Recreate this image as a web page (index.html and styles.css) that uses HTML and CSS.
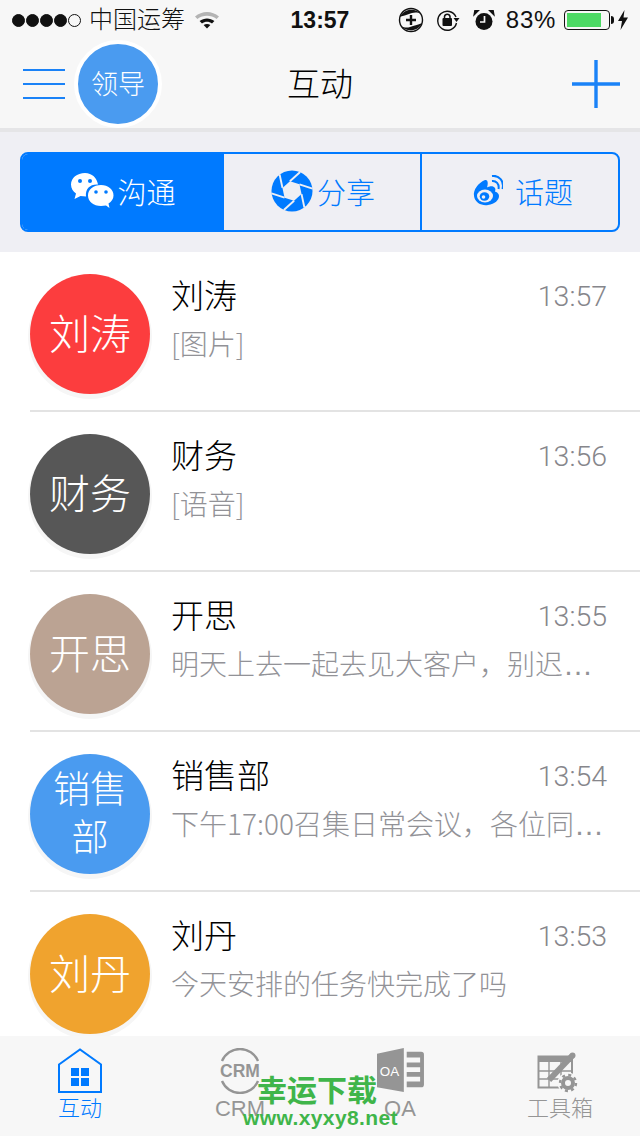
FILE: index.html
```html
<!DOCTYPE html>
<html lang="zh-CN">

<head>
    <meta charset="UTF-8">
    <meta name="viewport" content="width=device-width, initial-scale=1.0">
    <title>互动</title>
    <link rel="stylesheet" href="styles.css">
</head>

<body>
    <div class="app">
        <!-- Status bar -->
        <div class="status">
            <div class="status-left">
                <span class="signal"><i></i><i></i><i></i><i></i><i class="off"></i></span>
                <span class="carrier">中国运筹</span>
                <svg class="wifi" width="26" height="20" viewBox="0 0 26 20">
                    <path d="M1 6.500C8 .5 18 .5 25 6.500L22.600 9C17 4.600 9 4.600 3.400 9Z" fill="#b4b4b4"/>
                    <path d="M5.600 11C10 7.600 16 7.600 20.400 11L18 13.400C15 11.200 11 11.200 8 13.400Z" fill="#111"/>
                    <path d="M9.600 15C11.600 13.800 14.400 13.800 16.400 15L13 18.600Z" fill="#111"/>
                </svg>
            </div>
            <div class="clock">13:57</div>
            <div class="status-right">
                <svg class="sync" width="26" height="26" viewBox="0 0 26 26">
                    <circle cx="13" cy="13" r="11.500" fill="none" stroke="#111" stroke-width="1.400"/>
                    <path d="M2 10C5 2 17 0 23 7C18 4 14 6 11 7C7 8.500 4 9 2 10ZM24 16C21 24 9 26 3 19C8 22 12 20 15 19C19 18 22 17 24 16Z" fill="#111"/>
                    <path d="M13 8V18M8 13H18" stroke="#111" stroke-width="2.400"/>
                </svg>
                <svg class="lock" width="24" height="24" viewBox="0 0 24 24">
                    <path d="M20 9A9.500 9.500 0 1 0 20.500 15" fill="none" stroke="#111" stroke-width="1.400"/>
                    <path d="M17.500 10H23.500L20.500 14Z" fill="#111"/>
                    <rect x="6.500" y="10" width="9.500" height="8" rx="1" fill="#111"/>
                    <path d="M8.500 10V8.500A2.800 2.800 0 0 1 14 8.500V10" fill="none" stroke="#111" stroke-width="1.500"/>
                </svg>
                <svg class="alarm" width="22" height="22" viewBox="0 0 22 22">
                    <circle cx="11" cy="12.500" r="8.500" fill="#111"/>
                    <path d="M1 6L5.500 1.500L1.800 1.500ZM21 6L16.500 1.500L20.200 1.500Z" fill="#111" stroke="#111" stroke-width="1.200"/>
                    <path d="M11.500 7V13H7" fill="none" stroke="#f7f7f7" stroke-width="1.700"/>
                </svg>
                <span class="percent">83%</span>
                <span class="battery"><span class="battery-fill"></span></span>
                <span class="battery-tip"></span>
                <svg class="bolt" width="10" height="20" viewBox="0 0 10 20">
                    <path d="M6.500 0L0 11H4L2.500 20L10 7.500H5.500Z" fill="#111"/>
                </svg>
            </div>
        </div>

        <!-- Nav bar -->
        <div class="nav">
            <div class="menu"><i></i><i></i><i></i></div>
            <div class="boss">领导</div>
            <div class="nav-title">互动</div>
            <svg class="add" width="48" height="48" viewBox="0 0 48 48">
                <path d="M24 0V48M0 24H48" stroke="#1a82f7" stroke-width="3.400"/>
            </svg>
        </div>

        <!-- Segmented control -->
        <div class="seg-wrap">
            <div class="seg">
                <div class="seg-item seg-on seg-first">
                    <svg width="44" height="38" viewBox="0 0 44 38">
                        <path d="M15 1C7 1 1 6 1 12.500C1 16.500 3 19.500 6 21.500L4.500 27L10.500 24L16 24.500C15 17 20 12 28 12.500C27 6 22 1 15 1Z" fill="#fff"/>
                        <path d="M31 13C23.500 13 18 17.500 18 23.500C18 29.500 23.500 34 31 34L36 33.500L39.500 36L38.500 31.500C41.500 29.500 43.500 27 43.500 23.500C43.500 17.500 38 13 31 13Z" fill="#fff"/>
                        <circle cx="10" cy="9" r="2" fill="#007aff"/>
                        <circle cx="20" cy="9" r="2" fill="#007aff"/>
                        <circle cx="26" cy="20" r="1.800" fill="#007aff"/>
                        <circle cx="36" cy="20" r="1.800" fill="#007aff"/>
                    </svg>
                    <span>沟通</span>
                </div>
                <div class="seg-item seg-second">
                    <svg width="42" height="42" viewBox="0 0 44 44">
                        <circle cx="22" cy="22" r="21.500" fill="#007aff"/>
                        <g stroke="#efeff4" stroke-width="2" transform="rotate(-12 22 22)">
                            <path d="M22 11.500L34.500 4.300"/>
                            <path d="M22 11.500L34.500 4.300" transform="rotate(60 22 22)"/>
                            <path d="M22 11.500L34.500 4.300" transform="rotate(120 22 22)"/>
                            <path d="M22 11.500L34.500 4.300" transform="rotate(180 22 22)"/>
                            <path d="M22 11.500L34.500 4.300" transform="rotate(240 22 22)"/>
                            <path d="M22 11.500L34.500 4.300" transform="rotate(300 22 22)"/>
                            <path d="M22 11.500L31.100 16.750V27.250L22 32.500L12.900 27.250V16.750Z" fill="#efeff4" stroke="none"/>
                        </g>
                    </svg>
                    <span>分享</span>
                </div>
                <div class="seg-item seg-third">
                    <svg width="30" height="32" viewBox="0 0 30 32">
                        <path d="M12 5C5 8 0 15 1 21C2 28 9 31 15 30C22 29 26 25 26 21C26 18 23 17 22 16.500C23 14 22 12 20 11.500C18 11 15 12 14 12.500C15 9 15 7 14 5.500C13.500 5 13 4.800 12 5Z" fill="#007aff"/>
                        <ellipse cx="12" cy="21" rx="8" ry="6.500" fill="#efeff4"/>
                        <ellipse cx="11.500" cy="21.500" rx="4.800" ry="4.200" fill="#007aff"/>
                        <circle cx="10.500" cy="22" r="1.800" fill="#efeff4"/>
                        <path d="M19 6C23 5.500 26.500 9 25.500 14M19 1C26 0 31.500 6 29.500 14" stroke="#007aff" stroke-width="2" fill="none"/>
                    </svg>
                    <span>话题</span>
                </div>
            </div>
        </div>

        <!-- Conversation list -->
        <div class="list">
            <div class="row">
                <div class="avatar red">刘涛</div>
                <div class="row-main">
                    <div class="row-top"><span class="name">刘涛</span><span class="time">13:57</span></div>
                    <div class="msg">[图片]</div>
                </div>
            </div>
            <div class="row">
                <div class="avatar dark">财务</div>
                <div class="row-main">
                    <div class="row-top"><span class="name">财务</span><span class="time">13:56</span></div>
                    <div class="msg">[语音]</div>
                </div>
            </div>
            <div class="row">
                <div class="avatar tan">开思</div>
                <div class="row-main">
                    <div class="row-top"><span class="name">开思</span><span class="time">13:55</span></div>
                    <div class="msg">明天上去一起去见大客户，别迟<span class="dots">…</span></div>
                </div>
            </div>
            <div class="row">
                <div class="avatar blue small">销售部</div>
                <div class="row-main">
                    <div class="row-top"><span class="name">销售部</span><span class="time">13:54</span></div>
                    <div class="msg">下午17:00召集日常会议，各位同<span class="dots">…</span></div>
                </div>
            </div>
            <div class="row">
                <div class="avatar orange">刘丹</div>
                <div class="row-main">
                    <div class="row-top"><span class="name">刘丹</span><span class="time">13:53</span></div>
                    <div class="msg">今天安排的任务快完成了吗</div>
                </div>
            </div>
        </div>

        <!-- Tab bar -->
        <div class="tabs">
            <div class="tab tab-on">
                <svg width="46" height="46" viewBox="0 0 46 46">
                    <path d="M2 16.500L23 1.500L44 16.500V44H2Z" fill="none" stroke="#007aff" stroke-width="2"/>
                    <path d="M14 20H22V28H14ZM24 20H32V28H24ZM14 30H22V38H14ZM24 30H32V38H24Z" fill="#007aff"/>
                </svg>
                <span>互动</span>
            </div>
            <div class="tab">
                <svg width="44" height="44" viewBox="0 0 44 44">
                    <path d="M4 12A19.500 19.500 0 0 1 40 12M40 32A19.500 19.500 0 0 1 4 32" fill="none" stroke="#959595" stroke-width="2.400"/>
                    <text x="22" y="28" class="crm-mark">CRM</text>
                </svg>
                <span>CRM</span>
            </div>
            <div class="tab">
                <svg width="50" height="48" viewBox="0 0 50 48">
                    <path d="M1 6L29 0V46L1 41Z" fill="#959595"/>
                    <path d="M32 4H47Q50 4 50 7V38Q50 41 47 41H32V35H46V30H32V25H46V20H32V15H46V10H32Z" fill="#959595"/>
                    <text x="14" y="29" class="oa-mark">OA</text>
                </svg>
                <span>OA</span>
            </div>
            <div class="tab">
                <svg width="46" height="46" viewBox="0 0 46 46">
                    <path d="M1.500 8.500H35V39.500H1.500Z" fill="none" stroke="#959595" stroke-width="2"/>
                    <path d="M1 8H36V14H1Z" fill="#959595"/>
                    <path d="M1 23H35M1 31H35M12 13V40M24 13V40" stroke="#959595" stroke-width="1.400"/>
                    <circle cx="31" cy="35" r="10.500" fill="#f7f7f7"/>
                    <path d="M12 32L35 8" stroke="#959595" stroke-width="6"/>
                    <circle cx="35.500" cy="7.500" r="3" fill="#959595"/>
                    <circle cx="31" cy="35" r="5" fill="none" stroke="#959595" stroke-width="4"/>
                    <circle cx="31" cy="35" r="8" fill="none" stroke="#959595" stroke-width="2.400" stroke-dasharray="3 3.280"/>
                </svg>
                <span>工具箱</span>
            </div>
        </div>

        <!-- Site watermark over the tab bar -->
        <div class="mark">
            <div class="mark-title">幸运下载</div>
            <div class="mark-url">www.xyxy8.net</div>
        </div>
    </div>
</body>

</html>
```

FILE: styles.css
```css
/* Basic page styling */
* {
    box-sizing: border-box;
}

body {
    margin: 0;
    font-family: "Noto Sans CJK SC", "Liberation Sans", sans-serif;
    font-weight: 300;
    color: #000;
}

.app {
    position: relative;
    display: flex;
    flex-direction: column;
    width: 640px;
    height: 1136px;
    overflow: hidden;
    background-color: #fff;
}

/* Status bar */
.status {
    display: grid;
    flex: none;
    grid-template-columns: 1fr auto 1fr;
    align-items: center;
    height: 40px;
    padding: 0 12px;
    background-color: #f7f7f7;
    font-size: 24px;
    color: #111;
}

.status-left,
.status-right {
    display: flex;
    align-items: center;
}

.status-right {
    justify-content: flex-end;
}

.signal {
    display: flex;
    gap: 1px;
}

.signal i {
    width: 13px;
    height: 13px;
    border: 1px solid #111;
    border-radius: 50%;
    background-color: #111;
}

.signal i.off {
    background-color: transparent;
}

.carrier {
    margin-left: 8px;
    font-size: 24px;
    line-height: 36px;
    padding-bottom: 4px;
}

.wifi {
    margin-left: 9px;
}

.clock {
    font-family: "Liberation Sans", sans-serif;
    font-size: 23px;
    font-weight: bold;
}

.lock {
    margin-left: 12px;
}

.alarm {
    margin-left: 13px;
}

.percent {
    margin-left: 11px;
    font-family: "Liberation Sans", sans-serif;
    font-size: 24px;
    letter-spacing: 0.7px;
}

.battery {
    width: 46px;
    height: 20px;
    margin-left: 8px;
    padding: 2px;
    border: 1px solid #111;
    border-radius: 4px;
}

.battery-fill {
    display: block;
    width: 34px;
    height: 14px;
    background-color: #4cd964;
}

.battery-tip {
    width: 3px;
    height: 8px;
    margin-left: 1px;
    border-radius: 0 3px 3px 0;
    background-color: #111;
}

.bolt {
    margin-left: 4px;
}

/* Nav bar */
.nav {
    position: relative;
    display: flex;
    flex: none;
    align-items: center;
    height: 92px;
    padding: 0 20px 0 23px;
    border-bottom: 4px solid #e5e5e7;
    background-color: #f7f7f7;
}

.menu {
    display: flex;
    flex-direction: column;
    gap: 12px;
    width: 42px;
}

.menu i {
    height: 2px;
    background-color: #1a82f7;
}

.boss {
    display: flex;
    align-items: center;
    justify-content: center;
    width: 88px;
    height: 88px;
    margin-left: 9px;
    padding-bottom: 4px;
    border: 4px solid #fff;
    border-radius: 50%;
    background-color: #4a9bf0;
    font-size: 27px;
    color: #fff;
}

.nav-title {
    position: absolute;
    left: 0;
    right: 0;
    top: 18px;
    text-align: center;
    font-size: 33px;
    line-height: 48px;
    pointer-events: none;
}

.add {
    margin-left: auto;
}

/* Segmented control */
.seg-wrap {
    flex: none;
    height: 120px;
    padding: 20px;
    background-color: #efeff4;
}

.seg {
    display: flex;
    height: 80px;
    border: 2px solid #007aff;
    border-radius: 8px;
    overflow: hidden;
}

.seg-item {
    display: flex;
    flex: 1;
    align-items: center;
    justify-content: center;
    gap: 3px;
    padding-bottom: 2px;
    font-size: 29px;
    color: #007aff;
}

.seg-first {
    flex: none;
    width: 202px;
}

.seg-second {
    flex: none;
    gap: 4px;
    width: 198px;
    padding-left: 2px;
    border-right: 2px solid #007aff;
}

.seg-third {
    gap: 12px;
    padding-left: 6px;
}

.seg-on {
    background-color: #007aff;
    color: #fff;
}

/* Conversation list */
.list {
    flex: 1;
    overflow: hidden;
}

.row {
    position: relative;
    display: flex;
    height: 160px;
    padding: 22px 0 0 30px;
}

.row::after {
    content: "";
    position: absolute;
    left: 30px;
    right: 0;
    bottom: 0;
    height: 2px;
    background-color: #e3e3e3;
}

.avatar {
    display: flex;
    flex: none;
    align-items: center;
    justify-content: center;
    width: 120px;
    height: 120px;
    padding: 0 19px 6px;
    border-radius: 50%;
    box-shadow: 0 3px 0 2px #f6f6f6;
    text-align: center;
    font-size: 41px;
    line-height: 48px;
    color: #fff;
}

.avatar.small {
    font-size: 37px;
    padding: 0 23px 6px;
}

.red {
    background-color: #fc3d3e;
}

.dark {
    background-color: #575757;
}

.tan {
    background-color: #bba393;
}

.blue {
    background-color: #4a9bf0;
}

.orange {
    background-color: #f0a32e;
}

.row-main {
    flex: 1;
    min-width: 0;
    padding: 0 33px 0 21px;
}

.row-top {
    display: flex;
    justify-content: space-between;
    align-items: flex-start;
    height: 46px;
}

.name {
    font-size: 33px;
    line-height: 40px;
}

.time {
    font-family: Roboto, "Liberation Sans", sans-serif;
    font-weight: 300;
    font-size: 28.500px;
    line-height: 46px;
    color: #86868b;
}

.msg {
    margin-top: 2px;
    font-size: 28px;
    line-height: 42px;
    color: #929297;
    white-space: nowrap;
}

/* Ellipsis sits on the baseline, not centred as in the CJK font */
.dots {
    font-family: "Liberation Sans", sans-serif;
    font-size: 30px;
    letter-spacing: 1px;
}

/* Tab bar */
.tabs {
    display: grid;
    flex: none;
    grid-template-columns: repeat(4, 160px);
    height: 100px;
    padding-top: 12px;
    background-color: #f7f7f7;
}

.tab {
    display: flex;
    flex-direction: column;
    align-items: center;
    font-family: "Liberation Sans", "Noto Sans CJK SC", sans-serif;
    font-size: 22px;
    line-height: 26px;
    color: #959595;
}

.tab svg {
    height: 46px;
    margin-bottom: 2px;
}

.tab-on {
    color: #007aff;
}

.crm-mark {
    font-family: "Liberation Sans", sans-serif;
    font-size: 17.500px;
    font-weight: bold;
    text-anchor: middle;
    fill: #959595;
}

.oa-mark {
    font-family: "Liberation Sans", sans-serif;
    font-size: 14px;
    text-anchor: middle;
    fill: #fff;
}

/* Watermark */
.mark {
    position: absolute;
    left: 243px;
    top: 1070px;
    font-weight: bold;
    color: #3fb54a;
}

.mark-title {
    padding-left: 14px;
    font-size: 30px;
    line-height: 36px;
}

.mark-url {
    font-family: "Liberation Sans", sans-serif;
    font-size: 21px;
    letter-spacing: 0.4px;
    line-height: 24px;
}
```
